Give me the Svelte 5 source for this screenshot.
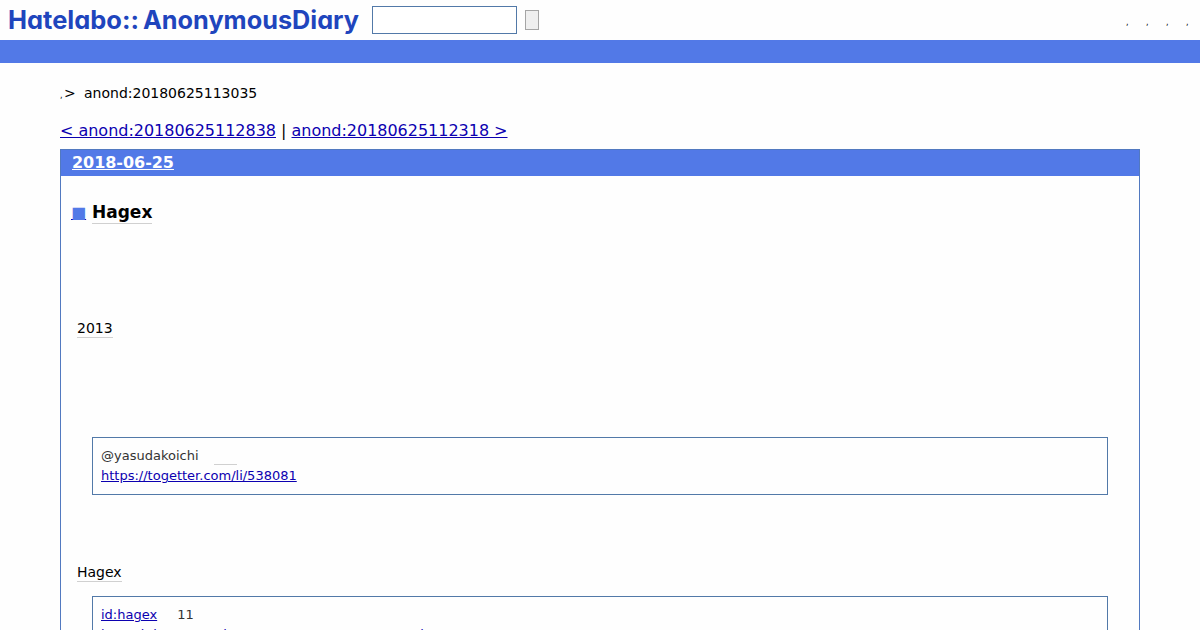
<script>
  const services = [",", ",", ",", ","]
  const previous = "anond:20180625112838"
  const next = "anond:20180625112318"
</script>

<header>
  <svg class="logo" width="364" height="40" role="img" aria-label="Hatelabo::AnonymousDiary">
    <text x="8" y="29" textLength="131" lengthAdjust="spacingAndGlyphs">Hatelabo::</text>
    <text x="143" y="29" textLength="216" lengthAdjust="spacingAndGlyphs">AnonymousDiary</text>
  </svg>
  <form on:submit|preventDefault>
    <input type="text" aria-label="Search" />
    <button aria-label="Search"></button>
  </form>
  <nav class="services">
    {#each services as mark}
      <span>{mark}</span>
    {/each}
  </nav>
</header>
<div class="bar"></div>

<main>
  <div class="crumbs"><span class="comma">,</span><span class="gt">&gt;</span><span>anond:20180625113035</span></div>
  <div class="pager">
    <a href="#prev">&lt; {previous}</a> | <a href="#next">{next} &gt;</a>
  </div>

  <article>
    <h2><a href="#day">2018-06-25</a></h2>
    <div class="section">
      <h3><a class="mark" href="#entry"><span>■</span></a><span class="keyword">Hagex</span></h3>
      <p class="year"><span class="keyword">2013</span></p>
      <blockquote>
        <p>@yasudakoichi<span class="keyword blank"></span></p>
        <p><a href="#togetter">https://togetter.com/li/538081</a></p>
      </blockquote>
      <p class="name"><span class="keyword">Hagex</span></p>
      <blockquote class="last">
        <p><a href="#hagex">id:hagex</a><span class="count">11</span></p>
        <p><a href="#comment">http://b.hatena.ne.jp/entry/togetter.com/538081/h</a></p>
      </blockquote>
    </div>
  </article>
</main>

<style>
  :global(body) {
    background: #fefefe;
    font-family: "DejaVu Sans", sans-serif;
    color: #000;
  }

  :global(#app) {
    height: 630px;
    overflow: hidden;
  }

  header {
    display: flex;
    height: 40px;
  }

  .logo {
    flex: none;
  }

  .logo text {
    font: 700 25.5px Inter, sans-serif;
    font-feature-settings: "cv11";
    fill: #1f45bd;
  }

  form {
    display: flex;
    align-items: center;
    gap: 8px;
    padding-left: 8px;
  }

  input {
    box-sizing: border-box;
    width: 145px;
    height: 28px;
    border: 1px solid #5279a8;
    background: #fff;
  }

  button {
    box-sizing: border-box;
    width: 14px;
    height: 20px;
    padding: 0;
    border: 1px solid #a5a5a5;
    border-radius: 0;
    background: #efefef;
  }

  .services {
    display: flex;
    gap: 16px;
    margin-left: auto;
    padding: 18px 10px 0 0;
    font-size: 8px;
    line-height: 9px;
  }

  .services span {
    width: 4px;
  }

  .bar {
    height: 23px;
    background: #5279e7;
  }

  main {
    padding: 0 60px;
  }

  .crumbs {
    display: flex;
    height: 16px;
    padding-top: 22px;
    font-size: 14px;
    line-height: 16px;
  }

  .comma {
    width: 4px;
    font-size: 8px;
    line-height: 22px;
  }

  .gt {
    width: 20px;
  }

  .pager {
    height: 19px;
    margin: 20px 0 9px;
    font-size: 16px;
    line-height: 19px;
    letter-spacing: -0.02px;
  }

  a {
    color: #0c00b0;
  }

  article {
    border: 1px solid #5279c0;
  }

  h2 {
    margin: 0;
    padding-left: 11px;
    background: #5279e7;
    font-size: 16px;
    line-height: 26px;
    letter-spacing: -0.04px;
  }

  h2 a {
    color: #fff;
  }

  .section {
    padding: 24px 31px 0 16px;
  }

  h3 {
    display: flex;
    margin: 0 0 0 -6px;
    height: 24px;
    font-size: 17px;
    line-height: 24px;
  }

  .mark {
    width: 21px;
    font-weight: normal;
    font-size: 16px;
    line-height: 25px;
  }

  .mark span {
    color: #5279e7;
  }

  .keyword {
    border-bottom: 1px solid #d0d0d0;
  }

  h3 .keyword {
    height: 23px;
  }

  .section p {
    margin: 0;
    font-size: 14px;
    line-height: 20px;
  }

  .section > p .keyword {
    display: inline-block;
    height: 19px;
    line-height: 20px;
  }

  .section .year {
    margin-top: 94px;
  }

  blockquote {
    box-sizing: border-box;
    height: 58px;
    margin: 99px 0 67px 15px;
    padding: 8px;
    border: 1px solid #5279a8;
    color: #333;
  }

  .section blockquote p {
    font-size: 13px;
  }

  .blank {
    display: inline-block;
    width: 23px;
    height: 15px;
    margin-left: 15px;
    vertical-align: -5px;
  }

  .last {
    height: 80px;
    margin: 14px 0 0 15px;
  }

  .count {
    margin-left: 20px;
  }
</style>
